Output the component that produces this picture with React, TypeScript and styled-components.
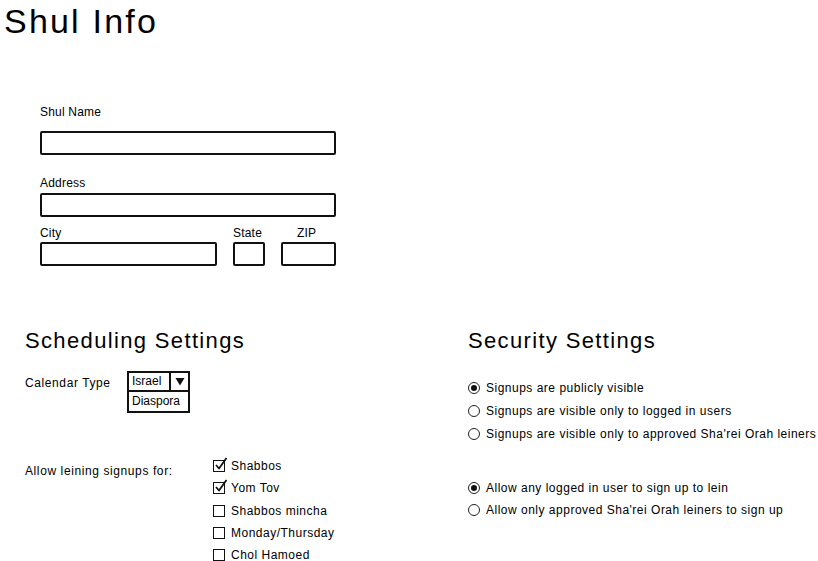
import React from "react";
import styled, { createGlobalStyle } from "styled-components";

const Global = createGlobalStyle`
  html, body { margin: 0; padding: 0; background: #fff; }
  body { font-family: "Liberation Sans", Arial, sans-serif; color: #000; }
  * { box-sizing: border-box; }
`;

const Page = styled.div`
  width: 818px;
  height: 561px;
  overflow: hidden;
  position: relative;
`;

const Title = styled.h1`
  margin: 0;
  padding: 2px 0 0 4px;
  font-size: 34px;
  line-height: 38px;
  font-weight: 400;
  letter-spacing: 2.2px;
`;

const Form = styled.div`
  width: 296px;
  margin: 65px 0 0 40px;
  display: flex;
  flex-direction: column;
`;

const Label = styled.div<{ $gap?: number; $indent?: number }>`
  font-size: 12px;
  line-height: 14px;
  letter-spacing: 0.2px;
  margin-bottom: ${(p) => p.$gap ?? 3}px;
  padding-left: ${(p) => p.$indent ?? 0}px;
`;

const Input = styled.div<{ $w?: number }>`
  width: ${(p) => (p.$w ? `${p.$w}px` : "100%")};
  height: 24px;
  border: 2px solid #111;
  border-radius: 2px;
  background: #fff;
`;

const Field = styled.div<{ $mt?: number; $ml?: number }>`
  display: flex;
  flex-direction: column;
  margin-top: ${(p) => p.$mt ?? 0}px;
  margin-left: ${(p) => p.$ml ?? 0}px;
`;

const Row = styled.div`
  display: flex;
  margin-top: 9px;
`;

const Sections = styled.div`
  display: grid;
  grid-template-columns: 443px 1fr;
  padding-left: 25px;
  margin-top: 61px;
`;

const Heading = styled.h2`
  margin: 0;
  font-size: 22px;
  line-height: 28px;
  font-weight: 400;
  letter-spacing: 1.35px;
`;

const SettingRow = styled.div<{ $mt: number }>`
  display: flex;
  margin-top: ${(p) => p.$mt}px;
`;

const SettingLabel = styled.div<{ $w: number }>`
  width: ${(p) => p.$w}px;
  font-size: 12px;
  line-height: 14px;
  letter-spacing: 0.6px;
  padding-top: 5px;
`;

const Select = styled.div`
  width: 63px;
  display: flex;
  flex-direction: column;
`;

const SelectTop = styled.div`
  display: flex;
  height: 21px;
  border: 2px solid #111;
`;

const SelectValue = styled.div`
  flex: 1;
  font-size: 12px;
  line-height: 17px;
  padding-left: 3px;
`;

const SelectArrow = styled.div`
  width: 19px;
  border-left: 2px solid #111;
  display: flex;
  align-items: center;
  justify-content: center;
`;

const SelectOption = styled.div`
  height: 21px;
  border: 2px solid #111;
  border-top: none;
  font-size: 12px;
  line-height: 18px;
  padding-left: 3px;
`;

const List = styled.div<{ $gap: number; $mt?: number }>`
  display: flex;
  flex-direction: column;
  gap: ${(p) => p.$gap}px;
  margin-top: ${(p) => p.$mt ?? 0}px;
`;

const Item = styled.div`
  display: flex;
  align-items: center;
  font-size: 12px;
  line-height: 14px;
  height: 14px;
  letter-spacing: 0.5px;
  white-space: nowrap;
`;

const CheckBox = styled.span`
  position: relative;
  width: 12px;
  height: 12px;
  border: 1.5px solid #111;
  margin-right: 6px;
  flex: none;
`;

const CheckMark = styled.svg`
  position: absolute;
  left: 0px;
  top: -4px;
`;

const Radio = styled.span<{ $on?: boolean }>`
  width: 12px;
  height: 12px;
  border: 1px solid #222;
  border-radius: 50%;
  margin-right: 6px;
  flex: none;
  display: flex;
  align-items: center;
  justify-content: center;
  &::after {
    content: "";
    display: ${(p) => (p.$on ? "block" : "none")};
    width: 6px;
    height: 6px;
    border-radius: 50%;
    background: #111;
  }
`;

const Column = styled.div`
  display: flex;
  flex-direction: column;
`;

const Check = ({ on, label }: { on?: boolean; label: string }) => (
  <Item>
    <CheckBox>
      {on && (
        <CheckMark width="14" height="14" viewBox="0 0 14 14">
          <path d="M2 8 L5 11.5 L12.5 1" fill="none" stroke="#111" strokeWidth="1.8" strokeLinejoin="round" />
        </CheckMark>
      )}
    </CheckBox>
    {label}
  </Item>
);

const Opt = ({ on, label }: { on?: boolean; label: string }) => (
  <Item>
    <Radio $on={on} />
    {label}
  </Item>
);

export default function App() {
  return (
    <Page>
      <Global />
      <Title>Shul Info</Title>
      <Form>
        <Field>
          <Label $gap={12}>Shul Name</Label>
          <Input />
        </Field>
        <Field $mt={21}>
          <Label>Address</Label>
          <Input />
        </Field>
        <Row>
          <Field>
            <Label $gap={2}>City</Label>
            <Input $w={177} />
          </Field>
          <Field $ml={16}>
            <Label $gap={2}>State</Label>
            <Input $w={32} />
          </Field>
          <Field $ml={16}>
            <Label $gap={2} $indent={16}>ZIP</Label>
            <Input $w={55} />
          </Field>
        </Row>
      </Form>
      <Sections>
        <Column>
          <Heading>Scheduling Settings</Heading>
          <SettingRow $mt={16}>
            <SettingLabel $w={102}>Calendar Type</SettingLabel>
            <Select>
              <SelectTop>
                <SelectValue>Israel</SelectValue>
                <SelectArrow>
                  <svg width="10" height="9" viewBox="0 0 10 9">
                    <path d="M0.5 1 L9.5 1 L5 8.5 Z" fill="#111" />
                  </svg>
                </SelectArrow>
              </SelectTop>
              <SelectOption>Diaspora</SelectOption>
            </Select>
          </SettingRow>
          <SettingRow $mt={46}>
            <SettingLabel $w={188}>Allow leining signups for:</SettingLabel>
            <List $gap={8.25}>
              <Check on label="Shabbos" />
              <Check on label="Yom Tov" />
              <Check label="Shabbos mincha" />
              <Check label="Monday/Thursday" />
              <Check label="Chol Hamoed" />
            </List>
          </SettingRow>
        </Column>
        <Column>
          <Heading>Security Settings</Heading>
          <List $gap={9} $mt={26}>
            <Opt on label="Signups are publicly visible" />
            <Opt label="Signups are visible only to logged in users" />
            <Opt label="Signups are visible only to approved Sha'rei Orah leiners" />
          </List>
          <List $gap={8} $mt={40}>
            <Opt on label="Allow any logged in user to sign up to lein" />
            <Opt label="Allow only approved Sha'rei Orah leiners to sign up" />
          </List>
        </Column>
      </Sections>
    </Page>
  );
}
